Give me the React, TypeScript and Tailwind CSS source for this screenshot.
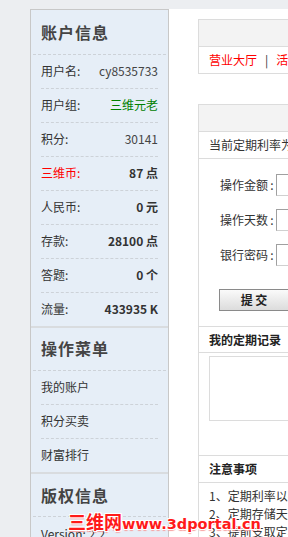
import React from "react";

const rows: { label: string; value: string; labelClass?: string; valueClass?: string }[] = [
  { label: "用户名:", value: "cy8535733", valueClass: "text-[#444]" },
  { label: "用户组:", value: "三维元老", valueClass: "text-[#008000]" },
  { label: "积分:", value: "30141", valueClass: "text-[#444]" },
  { label: "三维币:", value: "87 点", labelClass: "text-[#ff0000]", valueClass: "font-bold text-[#333]" },
  { label: "人民币:", value: "0 元", valueClass: "font-bold text-[#333]" },
  { label: "存款:", value: "28100 点", valueClass: "font-bold text-[#333]" },
  { label: "答题:", value: "0 个", valueClass: "font-bold text-[#333]" },
  { label: "流量:", value: "433935 K", valueClass: "font-bold text-[#333]" },
];

const menu = ["我的账户", "积分买卖", "财富排行"];

function FormRow({ label }: { label: string }) {
  return (
    <div className="flex items-center h-[22px]">
      <div className="w-[67px] flex justify-end text-[#333] whitespace-nowrap">
        <span>{label}</span>
        <span className="inline-block w-[8px] text-center">:</span>
      </div>
      <div className="w-[130px] h-[22px] border border-[#a0a0a0] border-b-[#d0d0d0] border-r-[#d0d0d0] bg-white" />
    </div>
  );
}

export default function App() {
  return (
    <div className="relative w-[288px] h-[537px] overflow-hidden bg-[#eceef1] pt-[9px] pl-[30px] flex font-['Noto_Sans_CJK_SC',sans-serif] text-[12px] leading-none text-[#333]">
      {/* Sidebar */}
      <aside className="w-[139px] shrink-0 bg-[#e6eef7] border-l border-t border-r border-[#c8c8c8] flex flex-col">
        <div className="h-[45px] shrink-0 mx-[2px] flex items-center pl-[8px] border-b border-dashed border-[#cdd2d8]">
          <span className="text-[16px] font-bold text-[#444] tracking-[1px]">账户信息</span>
        </div>
        <div className="px-[10px]">
          {rows.map((r, i) => (
            <div
              key={r.label}
              className={`flex items-center justify-between pb-[2px] ${i < rows.length - 1 ? "h-[34px] border-b border-dashed border-[#cdd2d8]" : "h-[33px]"}`}
            >
              <span className={r.labelClass ?? "text-[#333]"}>{r.label}</span>
              <span className={r.valueClass}>{r.value}</span>
            </div>
          ))}
        </div>
        <div className="border-t-2 border-[#d9dcdf]" />
        <div className="h-[43px] shrink-0 mx-[2px] flex items-center pl-[8px] pb-[2px] border-b border-dashed border-[#cdd2d8]">
          <span className="text-[16px] font-bold text-[#444] tracking-[1px]">操作菜单</span>
        </div>
        <div className="px-[10px]">
          {menu.map((m, i) => (
            <div
              key={m}
              className={`flex items-center pb-[2px] ${i < menu.length - 1 ? "h-[34px] border-b border-dashed border-[#cdd2d8]" : "h-[33px]"}`}
            >
              <span className="text-[#333]">{m}</span>
            </div>
          ))}
        </div>
        <div className="border-t-2 border-[#d9dcdf]" />
        <div className="h-[43px] shrink-0 mx-[2px] flex items-center pl-[8px] border-b border-dashed border-[#cdd2d8]">
          <span className="text-[16px] font-bold text-[#444] tracking-[1px]">版权信息</span>
        </div>
        <div className="px-[10px] h-[34px] shrink-0 flex items-center">
          <span className="text-[#333]">Version: 2.2</span>
        </div>
      </aside>

      {/* Main */}
      <main className="flex-1 min-w-0 bg-white pl-[29px] pt-[10px] overflow-hidden">
        <div className="w-[600px] border border-[#dcdcdc]">
          <div className="h-[27px] bg-[#f3f3f3] border-b border-[#dcdcdc]" />
          <div className="h-[26px] flex items-center pl-[10px] whitespace-nowrap">
            <span className="text-[#ff0000]">营业大厅</span>
            <span className="text-[#333] mx-[8px]">|</span>
            <span className="text-[#ff0000]">活期储蓄</span>
            <span className="text-[#333] mx-[8px]">|</span>
            <span className="text-[#ff0000]">定期储蓄</span>
          </div>
        </div>

        <div className="w-[600px] mt-[30px] border border-[#dcdcdc] border-b-0">
          <div className="h-[27px] bg-[#f3f3f3] border-b border-[#dcdcdc]" />
          <div className="h-[27px] flex items-center pl-[10px] whitespace-nowrap border-b border-[#dcdcdc]">
            当前定期利率为: 0.5%
          </div>
          <div className="pt-[15px] pl-[10px] pb-[15px] flex flex-col gap-[13px] border-b border-[#dcdcdc]">
            <FormRow label="操作金额" />
            <FormRow label="操作天数" />
            <FormRow label="银行密码" />
            <div className="mt-[10px] pl-[10px]">
              <button className="w-[70px] h-[22px] border border-[#8a8a8a] bg-gradient-to-b from-[#fafafa] to-[#dcdcdc] font-bold text-[#222] text-[12px] leading-none">
                提 交
              </button>
            </div>
          </div>
          <div className="h-[26px] flex items-center pl-[10px] font-bold text-[#222] border-b border-[#dcdcdc]">
            我的定期记录
          </div>
          <div className="pt-[3px] pl-[10px] h-[102px]">
            <div className="w-[560px] h-[65px] border border-[#dcdcdc]" />
          </div>
          <div className="h-[28px] flex items-center pl-[10px] font-bold text-[#222] border-t border-b border-[#dcdcdc]">
            注意事项
          </div>
          <div className="pl-[10px] pt-[4px] leading-[18px] whitespace-nowrap text-[#333]">
            <div>1、定期利率以存入时的利率为准</div>
            <div>2、定期存储天数最少为 7 天</div>
            <div>3、提前支取定期存款将没有利息</div>
          </div>
        </div>
      </main>

      {/* Watermark */}
      <div className="absolute left-[68px] top-[512px] flex items-baseline whitespace-nowrap font-bold text-[#ff1a1a] [text-shadow:1px_1px_0_#fff,-1px_-1px_0_#fff,1px_-1px_0_#fff,-1px_1px_0_#fff,0_2px_1px_#f7a0a0]">
        <span className="text-[18px] font-['Noto_Sans_CJK_SC',sans-serif] leading-none">三维网</span>
        <span className="text-[14.5px] font-['DejaVu_Sans',sans-serif] leading-none">www.3dportal.cn</span>
      </div>
    </div>
  );
}
